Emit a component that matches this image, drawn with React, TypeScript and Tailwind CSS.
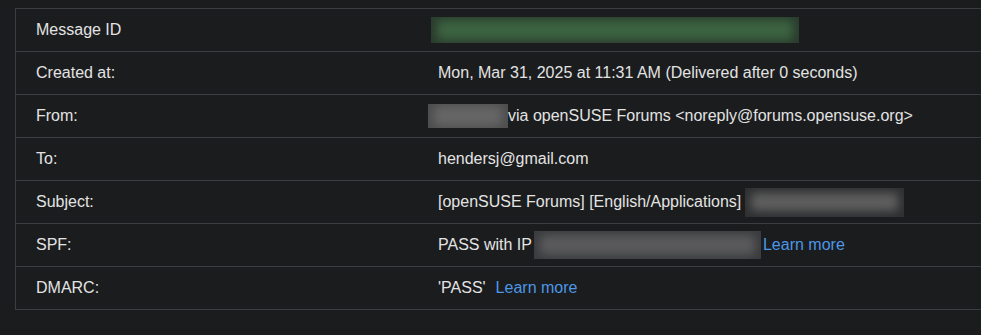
import React from "react";

function Blur({ w, h, color, bg, fill = "70%" }: { w: number; h: number; color: string; bg: string; fill?: string }) {
  return (
    <span
      className="inline-flex items-center overflow-hidden align-middle"
      style={{ width: w, height: h, background: bg }}
    >
      <span
        className="block w-full rounded-sm blur-[5px] mx-[6px]"
        style={{ background: color, height: fill }}
      />
    </span>
  );
}

const rows: { label: string; value: React.ReactNode }[] = [
  {
    label: "Message ID",
    value: (
      <span className="-ml-[7px]">
        <Blur w={368} h={26} color="#3c6341" bg="#2a3b2d" fill="75%" />
      </span>
    ),
  },
  { label: "Created at:", value: "Mon, Mar 31, 2025 at 11:31 AM (Delivered after 0 seconds)" },
  {
    label: "From:",
    value: (
      <span className="-ml-[10px] flex items-center">
        <Blur w={80} h={24} color="#666666" bg="#4d4d4d" fill="80%" />
        <span>via openSUSE Forums &lt;noreply@forums.opensuse.org&gt;</span>
      </span>
    ),
  },
  { label: "To:", value: "hendersj@gmail.com" },
  {
    label: "Subject:",
    value: (
      <span className="flex items-center">
        <span>[openSUSE Forums] [English/Applications]</span>
        <span className="ml-[4px] flex">
          <Blur w={159} h={29} color="#5e5e5e" bg="#2e2f31" fill="60%" />
        </span>
      </span>
    ),
  },
  {
    label: "SPF:",
    value: (
      <span className="flex items-center">
        <span>PASS with IP</span>
        <span className="ml-[2px] flex">
          <Blur w={227} h={28} color="#5a5a5c" bg="#3a3b3e" fill="70%" />
        </span>
        <span className="ml-[2px] text-[#4c97e6]">Learn more</span>
      </span>
    ),
  },
  {
    label: "DMARC:",
    value: (
      <span className="flex items-center">
        <span>'PASS'</span>
        <span className="ml-[10px] text-[#4c97e6]">Learn more</span>
      </span>
    ),
  },
];

export default function App() {
  return (
    <div
      className="w-[981px] h-[335px] overflow-hidden bg-[#1b1c1e] pt-[8px] pl-[15px]"
      style={{ fontFamily: '"Liberation Sans", Arial, sans-serif' }}
    >
      <div className="border-l border-t border-[#3c3d40] text-[16px] text-[#e3e3e3]">
        {rows.map((r) => (
          <div
            key={r.label}
            className="grid grid-cols-[402px_1fr] h-[43px] border-b border-[#3c3d40] items-center"
          >
            <div className="pl-[20px]">{r.label}</div>
            <div className="pl-[20px] flex items-center whitespace-nowrap">{r.value}</div>
          </div>
        ))}
      </div>
    </div>
  );
}
